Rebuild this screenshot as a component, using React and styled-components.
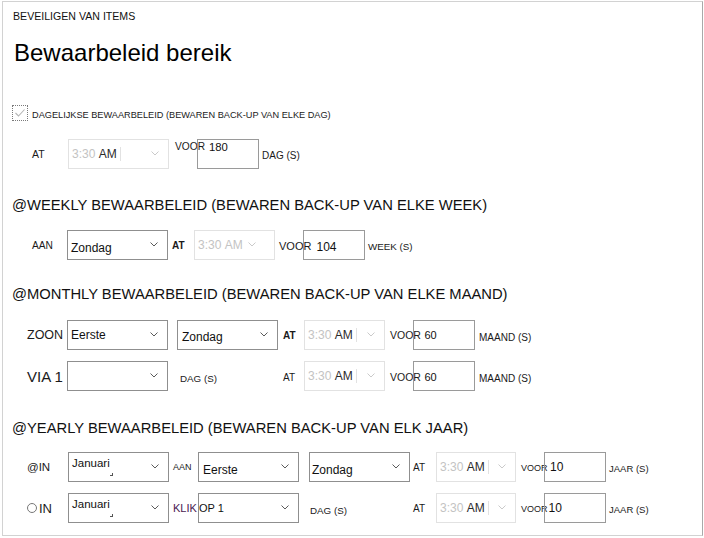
import React from "react";
import styled, { createGlobalStyle } from "styled-components";

const Global = createGlobalStyle`
  html, body { margin: 0; padding: 0; background: #fff; }
  body { font-family: "Liberation Sans", Arial, sans-serif; color: #1a1a1a; }
`;

const Frame = styled.div`
  box-sizing: border-box;
  margin: 1px 0 0 2px;
  width: 701px;
  height: 535px;
  border: 1px solid #d2d2d2;
  border-right-color: #a9a9a9;
  box-shadow: 0 3px 0 #f0f0f0;
  padding-top: 7px;
  display: flex;
  flex-direction: column;
`;

const Caption = styled.div`
  font-size: 10.6px;
  line-height: 14px;
  padding-left: 10px;
  color: #111;
  white-space: nowrap;
`;

const Title = styled.h1`
  margin: 16px 0 0;
  font-weight: 400;
  font-size: 24px;
  line-height: 28px;
  padding-left: 11px;
  color: #000;
`;

const CheckRow = styled.div`
  margin-top: 38px;
  height: 16px;
  display: flex;
  align-items: center;
  gap: 4px;
  padding-left: 9px;
`;

const CheckBox = styled.span`
  box-sizing: border-box;
  width: 16px;
  height: 16px;
  border: 1px dotted #7a7a7a;
  display: flex;
  align-items: center;
  justify-content: center;
`;

const CheckLabel = styled.span`
  font-size: 9.2px;
  color: #1a1a1a;
  padding-top: 3px;
  white-space: nowrap;
`;

const Heading = styled.h2`
  margin: ${(p) => p.$mt}px 0 0;
  font-weight: 400;
  font-size: 14.75px;
  line-height: 18px;
  padding-left: 9px;
  white-space: nowrap;
  color: #111;
`;

const Row = styled.div`
  margin-top: ${(p) => p.$mt}px;
  height: 30px;
  display: flex;
  align-items: center;
  padding-left: ${(p) => p.$indent}px;
`;

const Label = styled.span`
  flex-shrink: 0;
  display: flex;
  align-items: center;
  width: ${(p) => p.$w}px;
  margin-left: ${(p) => p.$ml || 0}px;
  padding-top: ${(p) => p.$pt || 0}px;
  font-size: ${(p) => p.$size || 11}px;
  font-weight: ${(p) => (p.$bold ? 700 : 400)};
  color: ${(p) => p.$color || "#1a1a1a"};
  white-space: nowrap;
`;

const Radio = styled.span`
  box-sizing: border-box;
  width: 10px;
  height: 10px;
  border: 1px solid #777;
  border-radius: 50%;
  margin-right: 2px;
`;

const SelectBox = styled.div`
  box-sizing: border-box;
  flex-shrink: 0;
  width: ${(p) => p.$w}px;
  height: 30px;
  margin-left: ${(p) => p.$ml || 0}px;
  border: 1px solid ${(p) => (p.$disabled ? "#e2e2e2" : "#8f8f8f")};
  background: #fff;
  display: flex;
  align-items: ${(p) => (p.$top ? "flex-start" : "center")};
  padding-left: ${(p) => p.$pl ?? 3}px;
  padding-right: ${(p) => p.$pr ?? 9}px;
`;

const Value = styled.span`
  flex: 1;
  white-space: nowrap;
  font-size: ${(p) => p.$size || 12}px;
  padding-top: ${(p) => p.$pt || 0}px;
  color: #111;
`;

const Tick = styled.span`
  display: inline-block;
  width: 2px;
  height: 2px;
  border-right: 1px solid #555;
  border-bottom: 1px solid #555;
  vertical-align: -9px;
`;

const TimeText = styled.span`
  flex: 1;
  display: flex;
  align-items: center;
  font-size: 12px;
  color: #c3c3c3;
  white-space: pre;
`;

const Am = styled.span`
  color: ${(p) => (p.$dim ? "#c3c3c3" : "#2a2a2a")};
`;

const Caret = styled.span`
  width: 1px;
  height: 14px;
  background: #e2e2e2;
  margin-left: 3px;
`;

const ChevSvg = styled.svg`
  flex-shrink: 0;
  align-self: center;
  margin-top: -2px;
`;

const VoorGroup = styled.div`
  display: flex;
  flex-shrink: 0;
  align-items: ${(p) => (p.$top ? "flex-start" : "center")};
  height: 30px;
  margin-left: ${(p) => p.$ml || 0}px;
  font-size: ${(p) => p.$size || 12}px;
`;

const VoorText = styled.span`
  width: ${(p) => p.$w}px;
  white-space: nowrap;
  padding-top: ${(p) => p.$pt || 0}px;
  color: #1a1a1a;
`;

const NumBox = styled.div`
  box-sizing: border-box;
  width: 62px;
  height: 30px;
  border: 1px solid #9a9a9a;
  padding-left: ${(p) => p.$pl}px;
  padding-top: ${(p) => p.$pt || 0}px;
  display: flex;
  align-items: ${(p) => (p.$top ? "flex-start" : "center")};
  font-size: ${(p) => p.$size || 12}px;
  color: #111;
`;

const Chevron = ({ disabled }) => (
  <ChevSvg width="8" height="5" viewBox="0 0 8 5">
    <path
      d="M0.5 0.5 L4 4 L7.5 0.5"
      fill="none"
      stroke={disabled ? "#cacaca" : "#5a5a5a"}
      strokeWidth="1"
    />
  </ChevSvg>
);

const Select = ({ w, ml, value, pt, size, top, pl, tick }) => (
  <SelectBox $w={w} $ml={ml} $top={top} $pl={pl}>
    <Value $pt={pt} $size={size}>
      {value}
      {tick && <Tick />}
    </Value>
    <Chevron />
  </SelectBox>
);

const TimeSelect = ({ w, ml, dim, pr }) => (
  <SelectBox $w={w} $ml={ml} $disabled $pl={3} $pr={pr}>
    <TimeText>
      {"3:30 "}
      <Am $dim={dim}>AM</Am>
      {!dim && <Caret />}
    </TimeText>
    <Chevron disabled />
  </SelectBox>
);

const Voor = ({ ml, w, size, value, pl, top, pt, numSize, labelPt }) => (
  <VoorGroup $ml={ml} $size={size} $top={top}>
    <VoorText $w={w} $pt={labelPt}>VOOR</VoorText>
    <NumBox $pl={pl} $top={top} $pt={pt} $size={numSize || size}>
      {value}
    </NumBox>
  </VoorGroup>
);

export default function App() {
  return (
    <>
      <Global />
      <Frame>
        <Caption>BEVEILIGEN VAN ITEMS</Caption>
        <Title>Bewaarbeleid bereik</Title>

        <CheckRow>
          <CheckBox>
            <svg width="12" height="10" viewBox="0 0 12 10">
              <path d="M1.5 5 L4.5 8 L10.5 1.5" fill="none" stroke="#b5b5b5" strokeWidth="1.1" />
            </svg>
          </CheckBox>
          <CheckLabel>DAGELIJKSE BEWAARBELEID (BEWAREN BACK-UP VAN ELKE DAG)</CheckLabel>
        </CheckRow>

        <Row $mt={18} $indent={29}>
          <Label $w={36} $size={10.5}>AT</Label>
          <TimeSelect w={101} />
          <Voor ml={6} w={22} size={10.2} numSize={11.3} value="180" pl={11} top labelPt={2} pt={1} />
          <Label $w={50} $ml={3} $size={10} $pt={2}>DAG (S)</Label>
        </Row>

        <Heading $mt={27}>@WEEKLY BEWAARBELEID (BEWAREN BACK-UP VAN ELKE WEEK)</Heading>
        <Row $mt={16} $indent={29}>
          <Label $w={35} $size={10.2}>AAN</Label>
          <Select w={101} value="Zondag" pt={5} />
          <Label $w={22} $ml={4} $size={10} $bold>AT</Label>
          <TimeSelect w={81} dim pr={18} />
          <Voor ml={4} w={24} size={11} numSize={12} value="104" pl={12.5} labelPt={2} pt={3} />
          <Label $w={60} $ml={3} $size={9.8} $pt={3}>WEEK (S)</Label>
        </Row>

        <Heading $mt={25}>@MONTHLY BEWAARBELEID (BEWAREN BACK-UP VAN ELKE MAAND)</Heading>
        <Row $mt={17} $indent={24}>
          <Label $w={40} $size={12.5}>ZOON</Label>
          <Select w={101} value="Eerste" />
          <Select w={101} ml={9} value="Zondag" pl={4} pt={4} />
          <Label $w={21} $ml={5} $size={10} $bold>AT</Label>
          <TimeSelect w={81} />
          <Voor ml={5} w={23} size={10.5} numSize={11} value="60" pl={10.5} />
          <Label $w={60} $ml={4} $size={10} $pt={4}>MAAND (S)</Label>
        </Row>
        <Row $mt={11} $indent={24}>
          <Label $w={40} $size={15}>VIA 1</Label>
          <Select w={101} value="" />
          <Label $w={103} $ml={12} $size={9.8} $pt={4}>DAG (S)</Label>
          <Label $w={21} $size={10} $pt={3}>AT</Label>
          <TimeSelect w={81} />
          <Voor ml={5} w={23} size={10.5} numSize={11} value="60" pl={10.5} pt={2} labelPt={2} />
          <Label $w={60} $ml={4} $size={10} $pt={4}>MAAND (S)</Label>
        </Row>

        <Heading $mt={28}>@YEARLY BEWAARBELEID (BEWAREN BACK-UP VAN ELK JAAR)</Heading>
        <Row $mt={15} $indent={24}>
          <Label $w={41} $size={11.5}>@IN</Label>
          <Select w={101} value="Januari" size={11.5} top pt={4} tick />
          <Label $w={25} $ml={4} $size={9}>AAN</Label>
          <Select w={101} value="Eerste" pl={4} pt={5} />
          <Select w={101} ml={10} value="Zondag" pl={2} pt={5} />
          <Label $w={23} $ml={3} $size={10} $pt={1}>AT</Label>
          <TimeSelect w={80} />
          <Voor ml={5} w={23} size={9} numSize={12} value="10" pl={5} labelPt={1} />
          <Label $w={50} $ml={3} $size={9.5} $pt={2}>JAAR (S)</Label>
        </Row>
        <Row $mt={11} $indent={24}>
          <Label $w={41} $size={13}>
            <Radio />
            IN
          </Label>
          <Select w={101} value="Januari" size={11.5} top pt={4} tick />
          <Label $w={25} $ml={4} $size={11} $color="#4a2050">KLIK</Label>
          <Select w={101} value="OP 1" pl={0} size={11} />
          <Label $w={103} $ml={11} $size={9.8} $pt={4}>DAG (S)</Label>
          <Label $w={23} $size={10} $pt={1}>AT</Label>
          <TimeSelect w={80} />
          <Voor ml={5} w={23} size={9} numSize={12} value="10" pl={3.5} labelPt={1} />
          <Label $w={50} $ml={3} $size={9.5} $pt={2}>JAAR (S)</Label>
        </Row>
      </Frame>
    </>
  );
}
